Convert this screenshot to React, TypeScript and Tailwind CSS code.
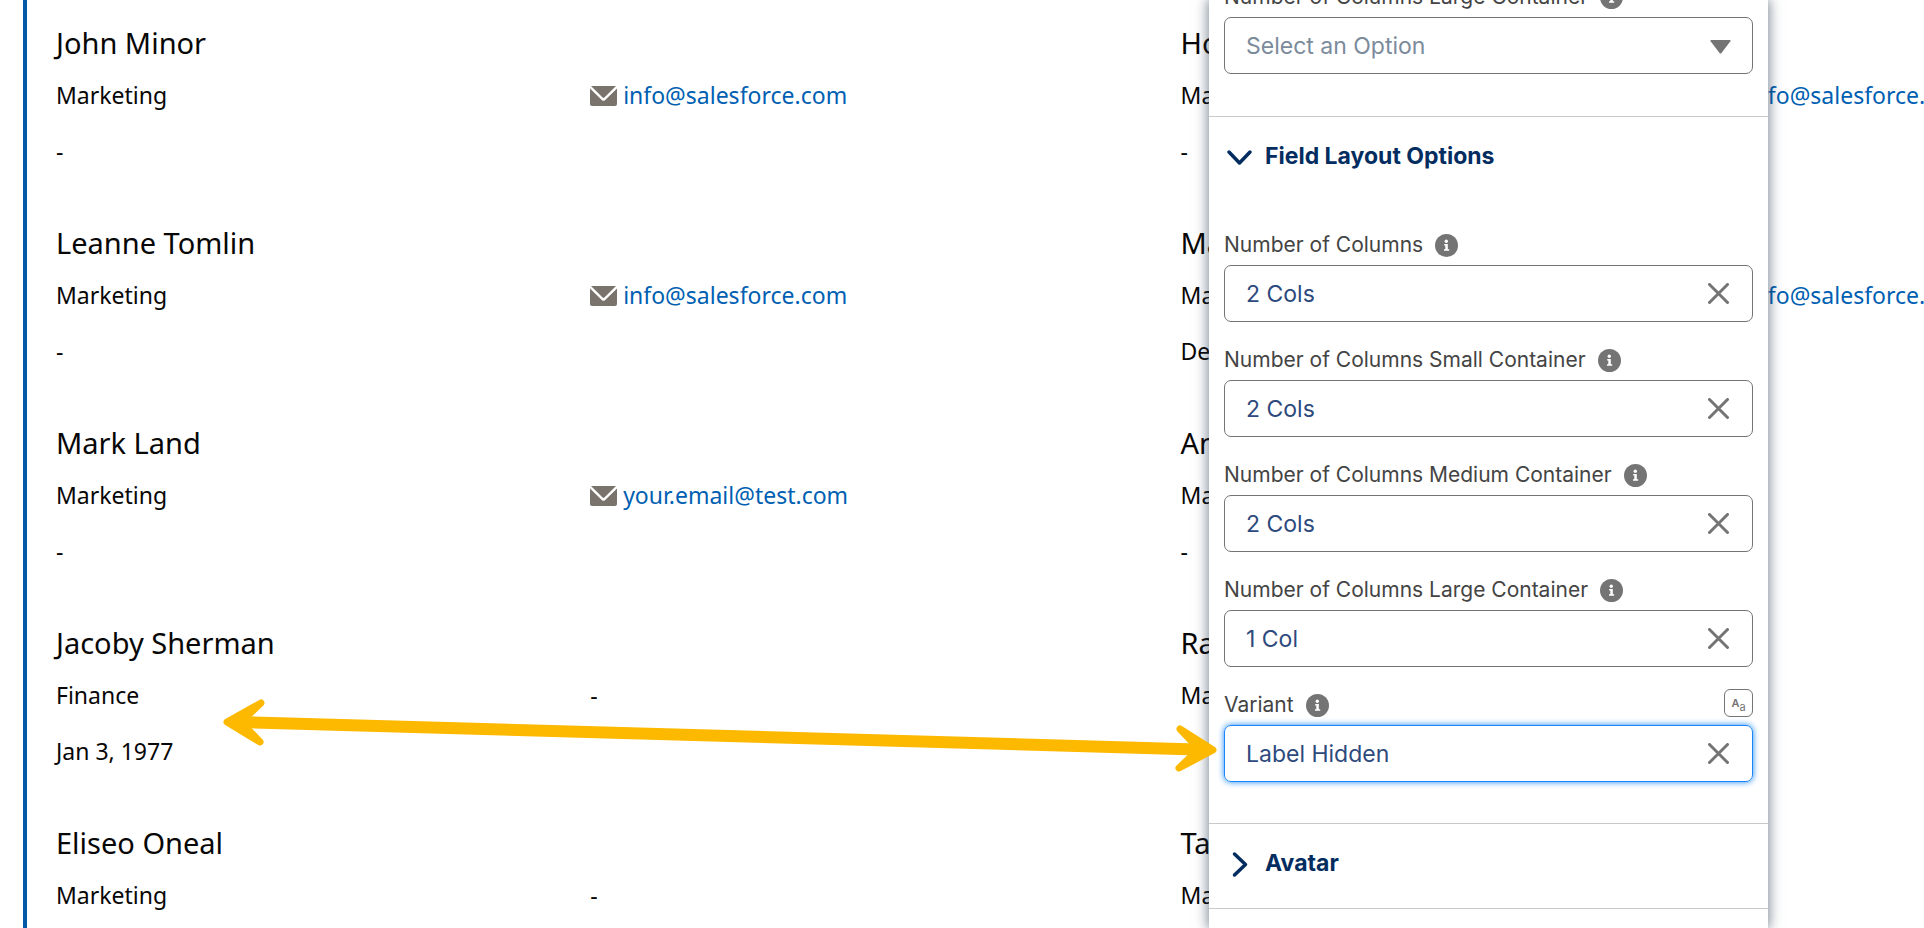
import { useState } from 'react'

type Contact = {
  name: string
  department: string
  email?: string
  birthdate?: string
}

const leftContacts: Contact[] = [
  { name: 'John Minor', department: 'Marketing', email: 'info@salesforce.com' },
  { name: 'Leanne Tomlin', department: 'Marketing', email: 'info@salesforce.com' },
  { name: 'Mark Land', department: 'Marketing', email: 'your.email@test.com' },
  { name: 'Jacoby Sherman', department: 'Finance', birthdate: 'Jan 3, 1977' },
  { name: 'Eliseo Oneal', department: 'Marketing' },
]

const rightContacts: Contact[] = [
  { name: 'Ho', department: 'Ma', email: 'info@salesforce.com' },
  { name: 'Ma', department: 'Ma', email: 'info@salesforce.com', birthdate: 'De' },
  { name: 'An', department: 'Ma' },
  { name: 'Ra', department: 'Ma' },
  { name: 'Ta', department: 'Ma' },
]

const layoutFields = [
  { id: 'cols', label: 'Number of Columns', value: '2 Cols' },
  { id: 'cols-small', label: 'Number of Columns Small Container', value: '2 Cols' },
  { id: 'cols-medium', label: 'Number of Columns Medium Container', value: '2 Cols' },
  { id: 'cols-large', label: 'Number of Columns Large Container', value: '1 Col' },
  { id: 'variant', label: 'Variant', value: 'Label Hidden', focused: true, textButton: true },
]

function InfoIcon() {
  return (
    <svg viewBox="0 0 23 23" className="size-[23px] shrink-0" aria-hidden="true">
      <circle cx="11.5" cy="11.5" r="11.5" fill="#747474" />
      <circle cx="11.3" cy="7.3" r="1.7" fill="#fff" />
      <path d="M9.2 10h3.600v5.200h1.400v1.600H9v-1.600h1.300v-3.600H9.200z" fill="#fff" />
    </svg>
  )
}

function ContactCard({ contact }: { contact: Contact }) {
  return (
    <article className="h-[200px]">
      <h2 className="text-[29px] leading-10">{contact.name}</h2>
      <div className="mt-4 grid grid-cols-[47.5%_1fr] text-[23px] leading-8">
        <p>{contact.department}</p>
        {contact.email ? (
          <p className="flex items-center gap-1.5">
            <svg viewBox="0 0 27 20" className="mt-0.5 h-5 w-[27px]" aria-hidden="true">
              <path d="M1 0h25L14.4 11.6a1.3 1.3 0 0 1-1.8 0z" fill="#7a736c" />
              <path d="M0 2.6 11.8 14a2.4 2.4 0 0 0 3.4 0L27 2.6V18a2 2 0 0 1-2 2H2a2 2 0 0 1-2-2z" fill="#7a736c" />
            </svg>
            <a href={`mailto:${contact.email}`} className="text-[#005fb2]">{contact.email}</a>
          </p>
        ) : (
          <p>-</p>
        )}
      </div>
      <p className="mt-6 text-[23px] leading-8">{contact.birthdate ?? '-'}</p>
    </article>
  )
}

function FieldLabel({ id, label }: { id: string; label: string }) {
  return (
    <div className="flex items-center gap-3">
      <label htmlFor={id} className="text-[21px] leading-7 text-[#444]">{label}</label>
      <InfoIcon />
    </div>
  )
}

function ComboField({ id, label, value: initial, focused, textButton }: (typeof layoutFields)[number]) {
  const [value, setValue] = useState(initial)

  return (
    <div>
      <div className="mb-1.5 flex h-7 items-center justify-between">
        <FieldLabel id={id} label={label} />
        {textButton && (
          <button
            type="button"
            aria-label="Insert text"
            className="mb-1 flex h-7 w-[29px] items-center justify-center rounded-md border border-[#747474] text-[#747474]"
          >
            <span className="text-[11px] leading-4 font-semibold">A</span>
            <span className="pt-2 text-[11px] leading-3">a</span>
          </button>
        )}
      </div>
      <div
        className={`flex h-[57px] items-center rounded-[7px] border pr-[23px] pl-[21px] ${
          focused ? 'border-[#1b87f5] shadow-[0_0_6px_#1b87f5]' : 'border-[#747474]'
        }`}
      >
        <input
          id={id}
          readOnly
          value={value}
          className="min-w-0 flex-1 bg-transparent text-[23px] leading-8 text-[#2e4a7d] outline-none"
        />
        <button type="button" aria-label={`Clear ${label}`} onClick={() => setValue('')}>
          <svg viewBox="0 0 21 21" className="size-[21px]" aria-hidden="true">
            <path d="M1.5 1.5l18 18M19.5 1.5l-18 18" stroke="#747474" strokeWidth="3" strokeLinecap="round" />
          </svg>
        </button>
      </div>
    </div>
  )
}

function SectionHeader({ title, open }: { title: string; open?: boolean }) {
  return (
    <button
      type="button"
      aria-expanded={!!open}
      className="flex w-full items-center gap-3 border-t border-[#c9c9c9] pt-[23px] pb-[29px] pl-[17px] text-left text-[23px] leading-8 font-bold text-[#032d60]"
    >
      <svg viewBox="0 0 27 27" className="mt-0.5 size-[27px]" fill="none" stroke="currentColor" strokeWidth="3.5" strokeLinecap="round" strokeLinejoin="round" aria-hidden="true">
        {open ? <path d="M3 8l10.500 11L24 8" /> : <path d="M8.500 3l11 10.500-11 10.500" />}
      </svg>
      {title}
    </button>
  )
}

// Property editor floating over the list
function PropertyPanel() {
  return (
    <aside className="absolute inset-y-0 right-[156px] w-[559px] overflow-hidden bg-white font-[Inter,'Liberation_Sans',sans-serif] shadow-[0_0_12px_1px_rgba(30,50,75,0.6)]">
      <div className="-mt-[17px] px-[15px] pb-[42px]">
        <FieldLabel id="container-large" label="Number of Columns Large Container" />
        <div className="relative mt-1.5">
          <select
            id="container-large"
            className="h-[57px] w-full appearance-none rounded-[7px] border border-[#747474] bg-white px-[21px] text-[23px] leading-8 text-[#7b8b9b]"
          >
            <option>Select an Option</option>
          </select>
          <svg viewBox="0 0 21 14" className="pointer-events-none absolute top-[23px] right-[22px] h-3.5 w-[21px]" aria-hidden="true">
            <path d="M1 0h19q1 .3.4 1.200L11.300 13.200q-.8.8-1.600 0L.6 1.200Q0 .3 1 0z" fill="#747474" />
          </svg>
        </div>
      </div>

      <SectionHeader title="Field Layout Options" open />
      <div className="flex flex-col gap-6 px-[15px] pt-[30px] pb-[41px]">
        {layoutFields.map((field) => (
          <ComboField key={field.id} {...field} />
        ))}
      </div>

      <SectionHeader title="Avatar" />
      <hr className="border-[#c9c9c9]" />
    </aside>
  )
}

export default function App() {
  return (
    <div className="relative h-screen overflow-hidden bg-white font-['Noto_Sans','Open_Sans',sans-serif] text-[#080707]">
      <main className="ml-[23px] flex min-h-full border-l-4 border-[#005aa7] pt-[23px] pl-[29px]">
        {[leftContacts, rightContacts].map((contacts, i) => (
          <section key={i} className="w-[60.2%] shrink-0">
            {contacts.map((contact) => (
              <ContactCard key={contact.name} contact={contact} />
            ))}
          </section>
        ))}
      </main>

      <PropertyPanel />

      {/* Callout arrow between the list and the Variant field */}
      <svg viewBox="0 0 1000 80" className="pointer-events-none absolute top-[698px] right-[705px] h-20 w-[1000px]" fill="none" stroke="#fdb900" aria-hidden="true">
        <path d="M20 24L978 51.500" strokeWidth="12" />
        <path d="M8 24L42 5L22 24L41 44Z" fill="#fdb900" strokeWidth="7" strokeLinejoin="round" />
        <path d="M994 52L961 31L980 51L960 70Z" fill="#fdb900" strokeWidth="7" strokeLinejoin="round" />
      </svg>
    </div>
  )
}
